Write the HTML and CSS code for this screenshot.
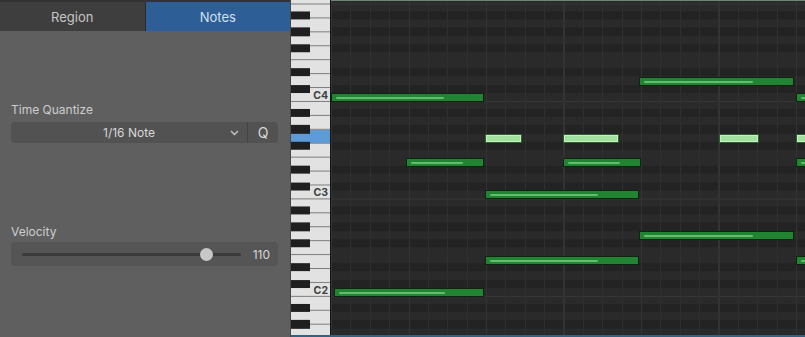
FILE: index.html
```html
<!DOCTYPE html>
<html>
<head>
  <meta charset="utf-8">
  <title>Piano Roll</title>
  <link rel="stylesheet" href="styles.css">
</head>
<body>
  <div class="inspector">
    <div class="tabs">
      <div class="tab">Region</div>
      <div class="tab active">Notes</div>
    </div>

    <div class="field-label first">Time Quantize</div>
    <div class="quantize">
      <div class="quantize-value">
        <span>1/16 Note</span>
        <svg class="chevron" width="9" height="6" viewBox="0 0 9 6"><path d="M1 1l3.5 3.5L8 1" fill="none" stroke="#c8c8c8" stroke-width="1.3"/></svg>
      </div>
      <div class="quantize-btn">Q</div>
    </div>

    <div class="field-label second">Velocity</div>
    <div class="velocity">
      <div class="track">
        <div class="knob" style="left: 84%"></div>
      </div>
      <div class="velocity-value">110</div>
    </div>
  </div>

  <div class="roll">
    <div class="keyboard">
      <div class="key-hilite"></div>
      <div class="black-keys"></div>
      <div class="key-label" style="top: 89px">C4</div>
      <div class="key-label" style="top: 186px">C3</div>
      <div class="key-label" style="top: 284px">C2</div>
    </div>

    <div class="grid">
      <!-- C4 -->
      <div class="note" style="left: 0; top: 93px; width: 153px"></div>
      <div class="note" style="left: 465px; top: 93px; width: 30px"></div>
      <!-- D4 -->
      <div class="note" style="left: 308px; top: 77px; width: 155px"></div>
      <!-- G3 (selected) -->
      <div class="note sel" style="left: 154px; top: 134px; width: 37px"></div>
      <div class="note sel" style="left: 232px; top: 134px; width: 56px"></div>
      <div class="note sel" style="left: 388px; top: 134px; width: 40px"></div>
      <div class="note sel" style="left: 465px; top: 134px; width: 30px"></div>
      <!-- E3 -->
      <div class="note" style="left: 75px; top: 158px; width: 78px"></div>
      <div class="note" style="left: 232px; top: 158px; width: 78px"></div>
      <div class="note" style="left: 465px; top: 158px; width: 30px"></div>
      <!-- C3 -->
      <div class="note" style="left: 154px; top: 190px; width: 154px"></div>
      <!-- G2 -->
      <div class="note" style="left: 308px; top: 231px; width: 155px"></div>
      <!-- E2 -->
      <div class="note" style="left: 154px; top: 256px; width: 154px"></div>
      <div class="note" style="left: 465px; top: 256px; width: 30px"></div>
      <!-- C2 -->
      <div class="note" style="left: 3px; top: 288px; width: 150px"></div>
    </div>
  </div>
</body>
</html>
```

FILE: styles.css
```css
html, body {
  margin: 0;
  padding: 0;
}

body {
  width: 805px;
  height: 337px;
  overflow: hidden;
  display: flex;
  font-family: Inter, "Noto Sans", sans-serif;
  background: #1e1e1e;
}

/* left inspector */
.inspector {
  width: 291px;
  height: 337px;
  box-sizing: border-box;
  background: #5f5f5f;
  border-right: 1px solid #474747;
  display: flex;
  flex-direction: column;
}

.tabs {
  display: flex;
  height: 31px;
  border-top: 2px solid #333;
  box-sizing: border-box;
}

.tab {
  flex: 1;
  display: flex;
  align-items: center;
  justify-content: center;
  background: #3e3e3e;
  color: #c6c6c6;
  font-size: 13px;
}

.tab.active {
  background: #2d5e95;
  color: #d2e0f0;
  border-left: 1px solid #2a2a2a;
}

.field-label {
  margin-left: 11px;
  color: #cdcdcd;
  font-size: 12px;
  line-height: 15px;
}

.field-label.first {
  margin-top: 71px;
}

.field-label.second {
  margin-top: 81px;
}

.quantize {
  margin: 5px 0 0 11px;
  width: 267px;
  height: 21px;
  display: flex;
  background: #525252;
  border-radius: 4px;
  color: #d8d8d8;
  font-size: 12px;
}

.quantize-value {
  flex: 1;
  position: relative;
  display: flex;
  align-items: center;
  justify-content: center;
  border-right: 1px solid #444;
}

.chevron {
  position: absolute;
  right: 8px;
  top: 8px;
}

.quantize-btn {
  width: 30px;
  display: flex;
  align-items: center;
  justify-content: center;
  font-size: 14px;
}

.velocity {
  margin: 3px 0 0 11px;
  width: 267px;
  height: 24px;
  box-sizing: border-box;
  padding: 0 8px 0 11px;
  display: flex;
  align-items: center;
  background: #555;
  border-radius: 4px;
}

.track {
  position: relative;
  width: 219px;
  height: 3px;
  border-radius: 2px;
  background: #3a3a3a;
}

.knob {
  position: absolute;
  top: -5px;
  width: 13px;
  height: 13px;
  margin-left: -6px;
  border-radius: 50%;
  background: #c8c8c8;
}

.velocity-value {
  margin-left: auto;
  color: #d8d8d8;
  font-size: 12px;
}

/* piano roll */
.roll {
  flex: 1;
  position: relative;
  display: flex;
  height: 337px;
}

.roll::after {
  content: "";
  position: absolute;
  left: 0;
  right: 0;
  bottom: 0;
  height: 2px;
  background: #33617f;
}

.keyboard {
  position: relative;
  width: 40px;
  box-sizing: border-box;
  border-right: 1px solid #141414;
  background:
    linear-gradient(to bottom, #7c7c7c 0 1px, transparent 1px) 0 3.5px / 100% 13.9286px repeat-y,
    #e2e2e2;
}

.key-hilite {
  position: absolute;
  left: 0;
  right: 0;
  top: 130px;
  height: 13px;
  background: #5c9bd8;
}

.black-keys {
  position: absolute;
  left: 0;
  top: 0;
  bottom: 0;
  width: 19px;
  background: linear-gradient(to bottom,
    transparent 0 8.125px,
    #1f1f1f 8.125px 16.25px,
    transparent 16.25px 24.375px,
    #1f1f1f 24.375px 32.5px,
    transparent 32.5px 40.625px,
    #1f1f1f 40.625px 48.75px,
    transparent 48.75px 65px,
    #1f1f1f 65px 73.125px,
    transparent 73.125px 81.25px,
    #1f1f1f 81.25px 89.375px,
    transparent 89.375px) 0 3.5px / 19px 97.5px repeat-y;
}

.key-label {
  position: absolute;
  right: 2px;
  height: 13px;
  line-height: 13px;
  font-size: 10.5px;
  font-weight: bold;
  color: #404040;
}

.grid {
  flex: 1;
  position: relative;
  overflow: hidden;
  box-shadow: inset 0 1px 0 #6d866d;
  background:
    repeating-linear-gradient(to right, #333 0 1px, transparent 1px 77.5px),
    repeating-linear-gradient(to right, #2f2f2f 0 1px, transparent 1px 19.375px),
    linear-gradient(to bottom, #363636 0 1px, transparent 1px) 0 3.5px / 100% 97.5px repeat-y,
    linear-gradient(to bottom,
      #2a2a2a 0 8.125px,
      #232323 8.125px 16.25px,
      #2a2a2a 16.25px 24.375px,
      #232323 24.375px 32.5px,
      #2a2a2a 32.5px 40.625px,
      #232323 40.625px 48.75px,
      #2a2a2a 48.75px 65px,
      #232323 65px 73.125px,
      #2a2a2a 73.125px 81.25px,
      #232323 81.25px 89.375px,
      #2a2a2a 89.375px 97.5px) 0 3.5px / 100% 97.5px repeat-y;
}

.note {
  position: absolute;
  height: 9px;
  box-sizing: border-box;
  border: 1px solid #0d2410;
  background: #228433;
}

.note::after {
  content: "";
  position: absolute;
  left: 4px;
  right: 26%;
  top: 2.5px;
  height: 2px;
  background: #62bd6f;
  border-radius: 1px;
}

.note.sel {
  border-color: #2f5f31;
  background: #a2e0a0;
  box-shadow: inset 0 0 0 1px #c6f2c3;
}

.note.sel::after {
  display: none;
}
```
